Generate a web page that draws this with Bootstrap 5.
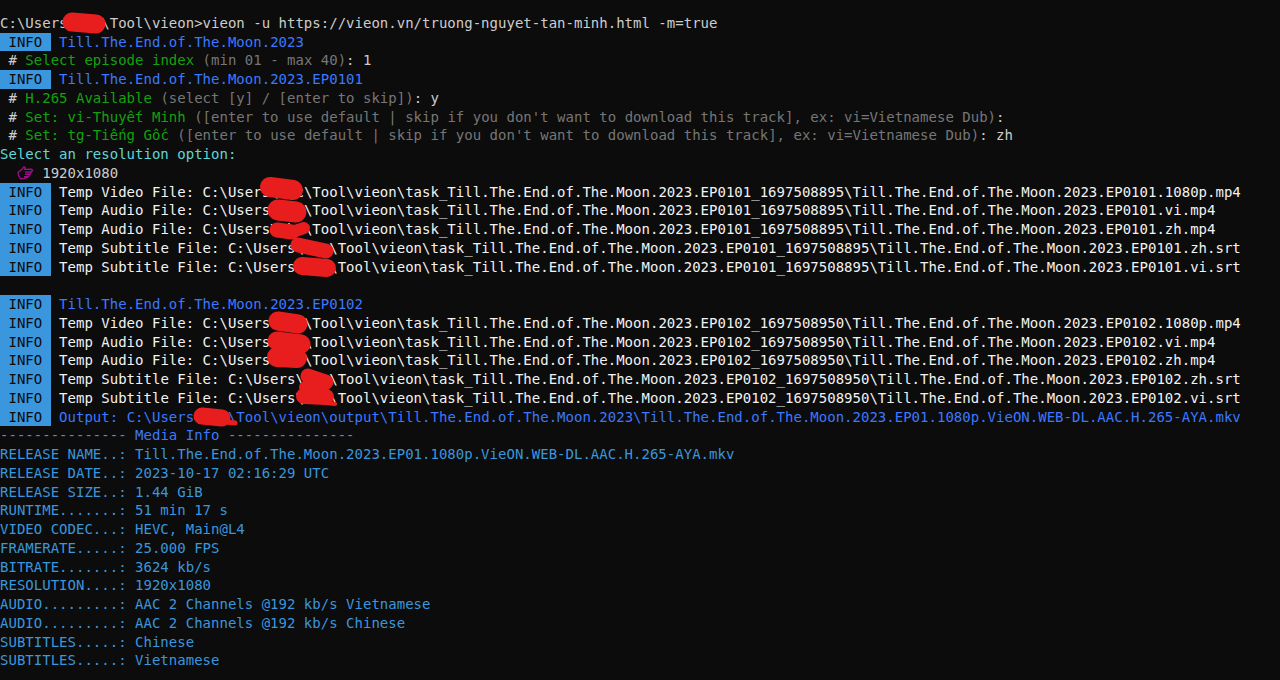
<!DOCTYPE html>
<html lang="en">
<head>
<meta charset="utf-8">
<title>vieon console</title>
<link href="https://cdn.jsdelivr.net/npm/bootstrap@5.3.0/dist/css/bootstrap.min.css" rel="stylesheet">
<style>
html,body{height:100%;margin:0;background:#0c0c0c;overflow:hidden}
.term{position:relative;height:680px;padding-top:13.9px;background:#0c0c0c;color:#cccccc;font-family:"DejaVu Sans Mono","Liberation Mono",monospace;font-size:14px;line-height:18.75px;letter-spacing:.012px}
.ln{height:18.75px;white-space:pre}
.tag{display:inline-block;height:18.75px;background:#3a96dd;color:#0c0c0c}
.wh{color:#f2f2f2}.bl{color:#3b78ff}.gr{color:#13a10e}.gy{color:#767676}.cy{color:#61d6d6}.md{color:#3a96dd}
.hand{display:inline-block;width:16.9px;height:14px;vertical-align:-2px}
.smear{position:absolute;left:0;top:0;width:1280px;height:680px;pointer-events:none}
</style>
</head>
<body>
<main class="term">
<div class="ln">C:\Users\abc\Tool\vieon&gt;vieon -u https://vieon.vn/truong-nguyet-tan-minh.html -m=true</div>
<div class="ln"><span class="tag"> INFO </span> <span class="bl">Till.The.End.of.The.Moon.2023</span></div>
<div class="ln"> # <span class="gr">Select episode index</span> <span class="gy">(min 01 - max 40)</span>: 1</div>
<div class="ln"><span class="tag"> INFO </span> <span class="bl">Till.The.End.of.The.Moon.2023.EP0101</span></div>
<div class="ln"> # <span class="gr">H.265 Available</span> <span class="gy">(select [y] / [enter to skip])</span>: y</div>
<div class="ln"> # <span class="gr">Set: vi-Thuyết Minh</span> <span class="gy">([enter to use default | skip if you don't want to download this track], ex: vi=Vietnamese Dub)</span>:</div>
<div class="ln"> # <span class="gr">Set: tg-Tiếng Gốc</span> <span class="gy">([enter to use default | skip if you don't want to download this track], ex: vi=Vietnamese Dub)</span>: zh</div>
<div class="ln cy">Select an resolution option:</div>
<div class="ln">  <svg class="hand" viewBox="0 0 17 14" aria-hidden="true"><path d="M1 6.5 5 3.2 7 .9 8.3 1.6 7.6 3.4 15 3.2 15.8 4.6 14.4 5.6 13.7 7.4 12.8 9 11.7 10.6 7 12.6 3.8 12.8 1.6 9.8ZM8 6.2 13.6 5.8M8 8.4 13 8M7 10.6 11.6 10.4" fill="none" stroke="#a0108c" stroke-width="1.3" stroke-linejoin="round"/></svg> 1920x1080</div>
<div class="ln wh"><span class="tag"> INFO </span> Temp Video File: C:\Users\abc\Tool\vieon\task_Till.The.End.of.The.Moon.2023.EP0101_1697508895\Till.The.End.of.The.Moon.2023.EP0101.1080p.mp4</div>
<div class="ln wh"><span class="tag"> INFO </span> Temp Audio File: C:\Users\abc\Tool\vieon\task_Till.The.End.of.The.Moon.2023.EP0101_1697508895\Till.The.End.of.The.Moon.2023.EP0101.vi.mp4</div>
<div class="ln wh"><span class="tag"> INFO </span> Temp Audio File: C:\Users\abc\Tool\vieon\task_Till.The.End.of.The.Moon.2023.EP0101_1697508895\Till.The.End.of.The.Moon.2023.EP0101.zh.mp4</div>
<div class="ln wh"><span class="tag"> INFO </span> Temp Subtitle File: C:\Users\abc\Tool\vieon\task_Till.The.End.of.The.Moon.2023.EP0101_1697508895\Till.The.End.of.The.Moon.2023.EP0101.zh.srt</div>
<div class="ln wh"><span class="tag"> INFO </span> Temp Subtitle File: C:\Users\abc\Tool\vieon\task_Till.The.End.of.The.Moon.2023.EP0101_1697508895\Till.The.End.of.The.Moon.2023.EP0101.vi.srt</div>
<div class="ln"></div>
<div class="ln"><span class="tag"> INFO </span> <span class="bl">Till.The.End.of.The.Moon.2023.EP0102</span></div>
<div class="ln wh"><span class="tag"> INFO </span> Temp Video File: C:\Users\abc\Tool\vieon\task_Till.The.End.of.The.Moon.2023.EP0102_1697508950\Till.The.End.of.The.Moon.2023.EP0102.1080p.mp4</div>
<div class="ln wh"><span class="tag"> INFO </span> Temp Audio File: C:\Users\abc\Tool\vieon\task_Till.The.End.of.The.Moon.2023.EP0102_1697508950\Till.The.End.of.The.Moon.2023.EP0102.vi.mp4</div>
<div class="ln wh"><span class="tag"> INFO </span> Temp Audio File: C:\Users\abc\Tool\vieon\task_Till.The.End.of.The.Moon.2023.EP0102_1697508950\Till.The.End.of.The.Moon.2023.EP0102.zh.mp4</div>
<div class="ln wh"><span class="tag"> INFO </span> Temp Subtitle File: C:\Users\abc\Tool\vieon\task_Till.The.End.of.The.Moon.2023.EP0102_1697508950\Till.The.End.of.The.Moon.2023.EP0102.zh.srt</div>
<div class="ln wh"><span class="tag"> INFO </span> Temp Subtitle File: C:\Users\abc\Tool\vieon\task_Till.The.End.of.The.Moon.2023.EP0102_1697508950\Till.The.End.of.The.Moon.2023.EP0102.vi.srt</div>
<div class="ln"><span class="tag"> INFO </span> <span class="bl">Output: C:\Users\abc\Tool\vieon\output\Till.The.End.of.The.Moon.2023\Till.The.End.of.The.Moon.2023.EP01.1080p.VieON.WEB-DL.AAC.H.265-AYA.mkv</span></div>
<div class="ln md">--------------- <span class="bl">Media Info</span> ---------------</div>
<div class="ln md">RELEASE NAME..: Till.The.End.of.The.Moon.2023.EP01.1080p.VieON.WEB-DL.AAC.H.265-AYA.mkv</div>
<div class="ln md">RELEASE DATE..: 2023-10-17 02:16:29 UTC</div>
<div class="ln md">RELEASE SIZE..: 1.44 GiB</div>
<div class="ln md">RUNTIME.......: 51 min 17 s</div>
<div class="ln md">VIDEO CODEC...: HEVC, Main@L4</div>
<div class="ln md">FRAMERATE.....: 25.000 FPS</div>
<div class="ln md">BITRATE.......: 3624 kb/s</div>
<div class="ln md">RESOLUTION....: 1920x1080</div>
<div class="ln md">AUDIO.........: AAC 2 Channels @192 kb/s Vietnamese</div>
<div class="ln md">AUDIO.........: AAC 2 Channels @192 kb/s Chinese</div>
<div class="ln md">SUBTITLES.....: Chinese</div>
<div class="ln md">SUBTITLES.....: Vietnamese</div>
<svg class="smear" viewBox="0 0 1280 680" aria-hidden="true" fill="none" stroke="#e81e1e" stroke-linecap="round" stroke-linejoin="round">
<path stroke-width="19" d="M72 22 96 24"/>
<path stroke-width="20" d="M270 187 293 190"/>
<path stroke-width="21" d="M278 210 296 212"/>
<path stroke-width="15" d="M277 230 292 232"/><path stroke-width="12" d="M292 232 304 228"/>
<path stroke-width="15" d="M298 245 326 251"/>
<path stroke-width="18" d="M302 266 327 268"/>
<path stroke-width="19" d="M278 321 298 324"/>
<path stroke-width="19" d="M277 341 301 344"/>
<path stroke-width="20" d="M277 357 297 358"/>
<path stroke-width="15" d="M308 376 326 382"/><path stroke-width="12" d="M305 387 325 385"/>
<path stroke-width="16" d="M304 396 326 397"/><path stroke-width="4" d="M326 403 335 404"/>
<path stroke-width="17" d="M202 416 222 418"/><path stroke-width="5" d="M226 422 235 423"/>
</svg>
</main>
<script src="https://cdn.jsdelivr.net/npm/bootstrap@5.3.0/dist/js/bootstrap.bundle.min.js"></script>
</body>
</html>
